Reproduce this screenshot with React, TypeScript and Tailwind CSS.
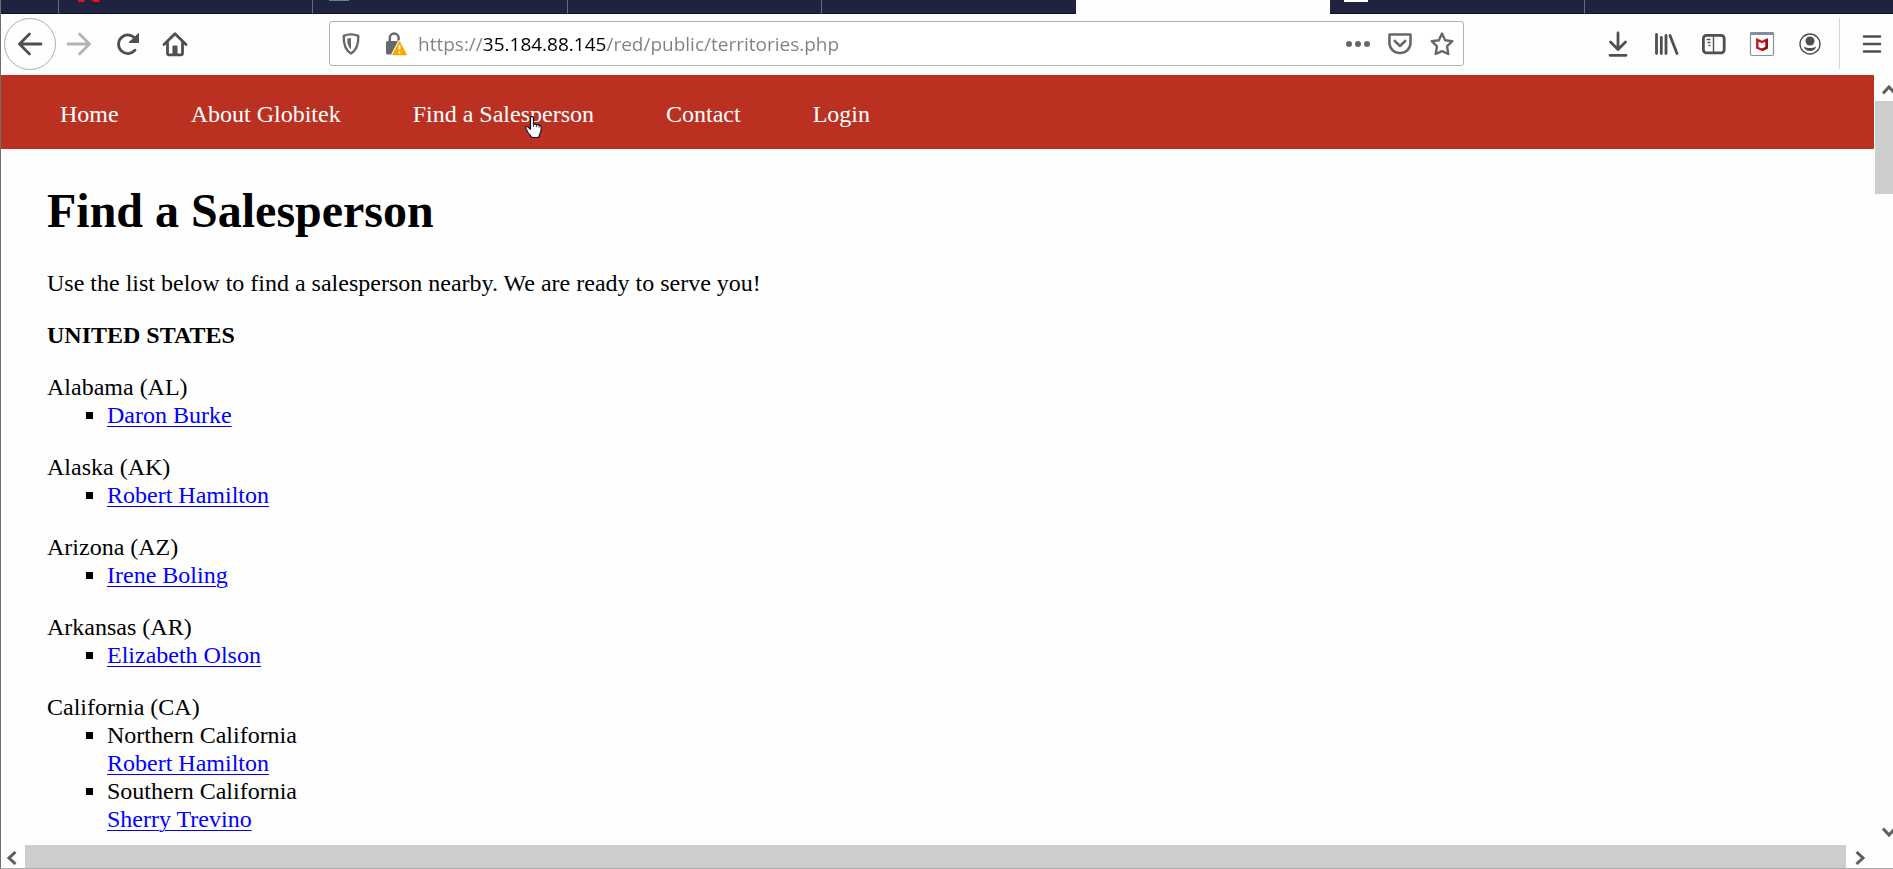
import React from "react";

type Salesperson = { name: string; region?: string };
type State = { label: string; people: Salesperson[] };

const states: State[] = [
  { label: "Alabama (AL)", people: [{ name: "Daron Burke" }] },
  { label: "Alaska (AK)", people: [{ name: "Robert Hamilton" }] },
  { label: "Arizona (AZ)", people: [{ name: "Irene Boling" }] },
  { label: "Arkansas (AR)", people: [{ name: "Elizabeth Olson" }] },
  {
    label: "California (CA)",
    people: [
      { region: "Northern California", name: "Robert Hamilton" },
      { region: "Southern California", name: "Sherry Trevino" },
    ],
  },
];

const navLinks = ["Home", "About Globitek", "Find a Salesperson", "Contact", "Login"];

function TabStrip() {
  const idle = "h-full border-b border-[#11122e] bg-[#20233f]";
  return (
    <div className="flex h-[14px] shrink-0 overflow-hidden bg-[#20233f]">
      <div className={`${idle} w-[57px] shrink-0`} />
      <div className={`${idle} w-[254px] shrink-0 border-l border-l-[#6a6b80] pl-[18px]`}>
        <svg width="26" height="2" viewBox="0 0 26 2" className="block">
          <path d="M1 0h7l-1 2H1zM14 0h8l1 2h-6z" fill="#e8101a" />
        </svg>
      </div>
      <div className={`${idle} w-[255px] shrink-0 border-l border-l-[#6a6b80] pl-[16px]`}>
        <div className="h-px w-[20px] bg-[#5b86a8]" />
      </div>
      <div className={`${idle} w-[254px] shrink-0 border-l border-l-[#6a6b80]`} />
      <div className={`${idle} w-[255px] shrink-0 border-l border-l-[#6a6b80]`} />
      <div className="h-full w-[254px] shrink-0 bg-[#fefefe]" />
      <div className={`${idle} w-[254px] shrink-0 pl-[14px]`}>
        <div className="h-[2px] w-[24px] bg-white" />
      </div>
      <div className={`${idle} grow border-l border-l-[#6a6b80]`} />
    </div>
  );
}

const stroke = {
  fill: "none",
  stroke: "currentColor",
  strokeLinecap: "round" as const,
  strokeLinejoin: "round" as const,
};

function IconButton({ label, className = "", children }: { label: string; className?: string; children: React.ReactNode }) {
  return (
    <button type="button" aria-label={label} className={`flex h-10 shrink-0 items-center justify-center ${className}`}>
      {children}
    </button>
  );
}

function AddressBar() {
  return (
    <div className="flex h-[45px] w-[1135px] shrink items-center rounded-[3px] border border-[#b1b1b3] bg-white text-[#686868]">
      <IconButton label="Tracking protection" className="ml-[10px] w-[22px]">
        <svg width="20" height="24" viewBox="0 0 20 24">
          <path d="M10 2.4c2.500 0 5.300.6 7.300 1.500.2 8-1.200 14.300-7.300 17.600C3.900 18.200 2.500 11.900 2.700 3.900 4.700 3 7.500 2.400 10 2.400z" {...stroke} strokeWidth="2.400" />
          <path d="M10 6v11.500C7.300 15.500 6.200 11.500 6.200 6.800 7.500 6.300 8.800 6 10 6z" fill="currentColor" />
        </svg>
      </IconButton>
      <IconButton label="Connection is not secure" className="ml-[22px] w-[24px]">
        <svg width="24" height="26" viewBox="0 0 24 26">
          <path d="M5.800 11V7a4.400 4.400 0 0 1 8.800 0v2" {...stroke} strokeWidth="2.500" />
          <rect x="2" y="10" width="13" height="13.500" rx="1.800" fill="currentColor" />
          <path d="M15.500 11 22 23.500H9z" fill="#fba700" stroke="#fff" strokeWidth="3.500" strokeLinejoin="round" />
          <path d="M15.500 11 22 23.500H9z" fill="#fba700" stroke="#fba700" strokeWidth="1.500" strokeLinejoin="round" />
          <path d="M15.500 14v4.500M15.500 20.500v2" stroke="#fff" strokeWidth="1.800" />
        </svg>
      </IconButton>
      <input
        type="text"
        aria-label="Address"
        defaultValue="https://35.184.88.145/red/public/territories.php"
        className="ml-[10px] h-10 min-w-0 grow bg-[linear-gradient(90deg,#808080_65px,#000_65px,#000_189px,#808080_189px)] bg-clip-text font-['Open_Sans',sans-serif] text-[19px] text-transparent caret-black outline-none"
      />
      <IconButton label="Page actions" className="w-[26px]">
        <svg width="26" height="8" viewBox="0 0 26 8" fill="currentColor">
          <circle cx="4" cy="4" r="3" />
          <circle cx="13" cy="4" r="3" />
          <circle cx="22" cy="4" r="3" />
        </svg>
      </IconButton>
      <IconButton label="Save to Pocket" className="ml-[16px] w-[26px]">
        <svg width="26" height="24" viewBox="0 0 26 24">
          <path d="M2.500 2.500h21V11c0 5.500-4.500 10-10.500 10S2.500 16.500 2.500 11z" {...stroke} strokeWidth="2.600" />
          <path d="m7.800 9 5.200 5 5.200-5" {...stroke} strokeWidth="2.600" />
        </svg>
      </IconButton>
      <IconButton label="Bookmark this page" className="mr-[8px] ml-[16px] w-[26px]">
        <svg width="26" height="26" viewBox="0 0 26 26">
          <path d="m13 2.500 3.100 6.700 7.200 1-5.300 5.100 1.300 7.700L13 20.200 6.700 23 8 15.300 2.700 10.200l7.200-1z" {...stroke} strokeWidth="2.400" />
        </svg>
      </IconButton>
    </div>
  );
}

function Toolbar() {
  return (
    <div className="flex h-[61px] shrink-0 items-center bg-[#fefefe] pb-[2px] text-[#4f4f50]">
      <button type="button" aria-label="Back" className="ml-[3px] flex size-[52px] shrink-0 items-center justify-center rounded-full border border-[#b0b0b0]">
        <svg width="26" height="24" viewBox="0 0 26 24">
          <path d="M24 12H2.500M12.500 2l-10 10 10 10" {...stroke} strokeWidth="2.800" />
        </svg>
      </button>
      <IconButton label="Forward" className="ml-[10px] w-[26px] text-[#b3b3b3]">
        <svg width="26" height="24" viewBox="0 0 26 24">
          <path d="M2 12h21.500M13.500 2l10 10-10 10" {...stroke} strokeWidth="2.800" />
        </svg>
      </IconButton>
      <IconButton label="Reload" className="ml-[23px] w-[26px]">
        <svg width="26" height="24" viewBox="0 0 26 24">
          <path d="M20 18.200A9.300 9.300 0 1 1 20.500 7" {...stroke} strokeWidth="2.800" />
          <path d="M23.500 1.500V10.500h-9.500z" fill="currentColor" stroke="currentColor" strokeWidth="1" strokeLinejoin="round" />
        </svg>
      </IconButton>
      <IconButton label="Home page" className="ml-[21px] w-[26px]">
        <svg width="26" height="26" viewBox="0 0 26 26">
          <path d="M2 13.500 13 2.700l11 10.800" {...stroke} strokeWidth="2.800" />
          <path d="M5.500 12v10.500a1.300 1.300 0 0 0 1.300 1.300h12.400a1.300 1.300 0 0 0 1.300-1.300V12" {...stroke} strokeWidth="2.800" />
          <path d="M10.500 23v-7.500a1 1 0 0 1 1-1h3a1 1 0 0 1 1 1V23z" fill="currentColor" />
        </svg>
      </IconButton>
      <div className="w-[141px] shrink" />
      <AddressBar />
      <div className="min-w-4 grow" />
      <IconButton label="Downloads" className="w-[20px]">
        <svg width="20" height="26" viewBox="0 0 20 26">
          <path d="M10 2v16M2.500 11l7.500 7.500 7.500-7.500M2 24.300h16" {...stroke} strokeWidth="2.800" />
        </svg>
      </IconButton>
      <IconButton label="Library" className="ml-[26px] w-[25px]">
        <svg width="25" height="24" viewBox="0 0 25 24">
          <path d="M2.500 2.500v19M7.300 5.500v16M12 3.500v18M16 3.500l7 18" {...stroke} strokeWidth="2.800" />
        </svg>
      </IconButton>
      <IconButton label="Sidebars" className="ml-[22px] w-[26px]">
        <svg width="26" height="22" viewBox="0 0 26 22">
          <rect x="2.400" y="2.400" width="20.800" height="17.400" rx="3" {...stroke} strokeWidth="2.800" />
          <path d="M12.500 2v18" stroke="currentColor" strokeWidth="1.400" />
          <path d="M5.500 6.500h4M6.500 9.500h3M7.500 12.500h2" stroke="currentColor" strokeWidth="1.300" />
        </svg>
      </IconButton>
      <IconButton label="Web advisor" className="ml-[22px] w-[26px]">
        <svg width="26" height="26" viewBox="0 0 26 26">
          <rect x="1.500" y="1.500" width="23" height="23" rx="1.500" fill="#fefefe" stroke="#8a9296" strokeWidth="1.200" />
          <path d="M1 4V2.500A1.500 1.500 0 0 1 2.500 1h21A1.500 1.500 0 0 1 25 2.500V4z" fill="#7d909b" />
          <path d="M8.300 8.800 13 11l4.700-2.200v8L13 18.800l-4.700-2z" fill="none" stroke="#c01818" strokeWidth="2.400" />
          <path d="M17.700 8.800v8L13 18.800" fill="none" stroke="#8e1010" strokeWidth="2.400" />
        </svg>
      </IconButton>
      <IconButton label="Account" className="ml-[23px] w-[24px]">
        <svg width="24" height="24" viewBox="0 0 24 24">
          <circle cx="12" cy="12" r="10" fill="none" stroke="currentColor" strokeWidth="1.400" />
          <circle cx="12" cy="9" r="4.500" fill="currentColor" />
          <path d="M5.800 14.500c2 1.200 4 1.600 6.200 1.600s4.200-.4 6.200-1.600c-.6 2.900-3 4.500-6.200 4.500s-5.600-1.600-6.200-4.500z" fill="currentColor" />
        </svg>
      </IconButton>
      <div className="ml-[17px] h-[51px] w-px shrink-0 bg-[#d3d3e6]" />
      <IconButton label="Menu" className="mr-[11px] ml-[22px] w-[20px]">
        <svg width="20" height="20" viewBox="0 0 20 20">
          <path d="M2 2.500h16M2 10h16M2 17.500h16" {...stroke} strokeWidth="2.600" />
        </svg>
      </IconButton>
    </div>
  );
}

function HandCursor() {
  return (
    <svg width="17" height="23" viewBox="0 0 17 23" className="absolute top-[16px] left-[112px]">
      <path
        d="M5.500 1.800c0-1.700 3-1.700 3 0v6l5.800 1.400c1.400.4 2 1.300 2 2.600 0 3-.8 5-1.800 7.200L13.500 21.500H7L3 16.500.8 12.500c-.7-1.600 1.200-2.600 2.500-1.300l2.200 2z"
        fill="#fff"
        stroke="#11122e"
        strokeWidth="1.200"
        strokeLinejoin="round"
      />
      <path d="M8.500 8v3M11.400 8.800v2.400M14 9.600v2" stroke="#11122e" strokeWidth="0.800" />
    </svg>
  );
}

function SiteNav() {
  return (
    <nav className="flex h-[74px] shrink-0 items-center gap-x-[72px] bg-[#ba3122] pt-[4px] pl-[59px] text-[24px] leading-[28px] text-white">
      {navLinks.map((link) => (
        <a key={link} href="#" className="relative whitespace-nowrap">
          {link}
          {link === "Find a Salesperson" && <HandCursor />}
        </a>
      ))}
    </nav>
  );
}

function Territories() {
  return (
    <main className="px-[46px] pt-[34px] text-[24px] leading-[28px] text-black">
      <h1 className="text-[48px] leading-[56px] font-bold">Find a Salesperson</h1>
      <p className="mt-[30px]">Use the list below to find a salesperson nearby. We are ready to serve you!</p>
      <h2 className="mt-[24px] font-bold">UNITED STATES</h2>
      {states.map((state) => (
        <section key={state.label} className="mt-[24px]">
          <h3>{state.label}</h3>
          <ul className="list-[square] pl-[60px]">
            {state.people.map((person) => (
              <li key={person.name}>
                {person.region && <div>{person.region}</div>}
                <a href="#" className="text-[#0000ff] underline decoration-1 underline-offset-3">
                  {person.name}
                </a>
              </li>
            ))}
          </ul>
        </section>
      ))}
    </main>
  );
}

function Chevron({ d, width, height }: { d: string; width: number; height: number }) {
  return (
    <svg width={width} height={height} viewBox={`0 0 ${width} ${height}`}>
      <path d={d} fill="none" stroke="#5f5f5f" strokeWidth="3" />
    </svg>
  );
}

export default function App() {
  return (
    <div className="flex h-screen flex-col overflow-hidden border-b border-l border-b-[#ababab] border-l-[#6f6f6f] bg-[#fefefe] font-['Liberation_Serif',serif]">
      <TabStrip />
      <Toolbar />
      <div className="flex min-h-0 grow">
        <div className="min-w-0 grow overflow-hidden">
          <SiteNav />
          <Territories />
        </div>
        <div className="flex w-[19px] shrink-0 flex-col items-end justify-between pl-px">
          <div className="flex w-full grow flex-col items-end">
            <div className="flex h-[26px] items-center pt-[3px]">
              <Chevron d="M1 9.500 7 3l6 6.500" width={11} height={11} />
            </div>
            <div className="h-[93px] w-full bg-[#cdcdcd]" />
          </div>
          <div className="flex h-[26px] items-center">
            <Chevron d="M1 1.500 7 8l6-6.500" width={11} height={11} />
          </div>
        </div>
      </div>
      <div className="flex h-[23px] shrink-0 items-center">
        <div className="flex w-[24px] shrink-0 pt-[2px] pl-[5px]">
          <Chevron d="M9.500 1 3 7l6.500 6" width={11} height={14} />
        </div>
        <div className="h-full grow bg-[#cdcdcd]" />
        <div className="mr-[19px] flex w-[28px] shrink-0 justify-center pt-[2px]">
          <Chevron d="M1.500 1 8 7l-6.500 6" width={11} height={14} />
        </div>
      </div>
    </div>
  );
}
